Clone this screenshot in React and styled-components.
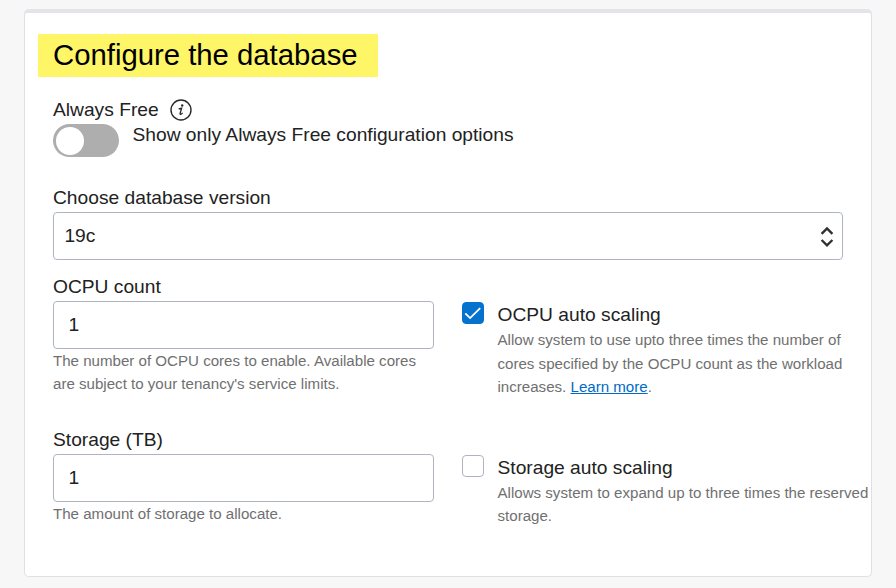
import React from "react";
import styled, { createGlobalStyle } from "styled-components";

const GlobalStyle = createGlobalStyle`
  * { box-sizing: border-box; }
  body {
    margin: 0;
    background: #f7f7f7;
    color: #222;
    font-family: "Liberation Sans", Arial, sans-serif;
    overflow: hidden;
  }
`;

const Page = styled.main`
  height: 588px;
  padding: 9px 24px 11px;
`;

const Card = styled.section`
  height: 568px;
  padding: 21px 0 0 28px;
  background: #fff;
  border: 1px solid #e0e0e3;
  border-top: 4px solid #e4e3e9;
  border-radius: 5px;
`;

const Title = styled.h1`
  width: 340px;
  height: 43px;
  margin: 0 0 0 -15px;
  padding-left: 15px;
  background: #fff667;
  color: #000;
  font-size: 29.3px;
  font-weight: 400;
  line-height: 42px;
  white-space: nowrap;
`;

const Text = styled.span`
  display: block;
  font-size: 19.22px;
  line-height: 24px;
  white-space: nowrap;
`;

const FreeHeading = styled.div`
  display: flex;
  height: 25px;
  margin-top: 21px;
  gap: 11px;

  svg { display: block; margin-top: 1px; }
`;

const ToggleRow = styled.div`
  display: flex;
  align-items: flex-start;
  gap: 13.5px;
  height: 63px;

  ${Text} { line-height: 23px; }
`;

const Toggle = styled.button`
  flex: none;
  width: 66px;
  height: 33px;
  margin-top: 1px;
  padding: 2px 2.5px;
  border: 0;
  border-radius: 17px;
  background: #aeaeae;

  &::before {
    content: "";
    display: block;
    width: 28px;
    height: 28px;
    border-radius: 50%;
    background: #fff;
  }
`;

const Field = styled.div`
  width: ${(p) => p.$width}px;
`;

const Control = styled.div`
  display: flex;
  align-items: center;
  justify-content: space-between;
  height: 48px;
  margin-top: 2px;
  padding: 0 8px 0 ${(p) => p.$inset}px;
  border: 1px solid #aeb5c0;
  border-radius: 4px;

  svg { margin-top: 2px; }
`;

const Columns = styled.div`
  display: grid;
  grid-template-columns: 381px 1fr;
  column-gap: 28px;
  height: 153px;
`;

const Fields = styled.div`
  margin-top: 15px;
`;

const Helper = styled.p`
  margin: ${(p) => p.$top || 0}px 0 0;
  color: #707070;
  font-size: 15.1px;
  line-height: 23.4px;
  white-space: nowrap;
`;

const Line = styled.span`
  display: block;
  line-height: ${(p) => p.$height || 23.4}px;
`;

const Option = styled.div`
  display: flex;
  gap: 13.5px;
  padding-top: 27px;
`;

const OptionText = styled.div`
  padding-top: 1px;
`;

const Checkbox = styled.span`
  flex: none;
  width: 22px;
  height: 22px;
  border: 1px solid ${(p) => (p.$checked ? "#0572ce" : "#aeb5c0")};
  border-radius: 4px;
  background: ${(p) => (p.$checked ? "#0572ce" : "#fff")};

  svg { display: block; }
`;

const Link = styled.a`
  color: #006bc7;
  text-decoration: underline;
`;

const InfoIcon = () => (
  <svg width="22" height="22" viewBox="0 0 22 22" fill="none" stroke="#292929">
    <circle cx="11" cy="11" r="10" strokeWidth="1.4" />
    <circle cx="12.2" cy="6.5" r="1.2" fill="#292929" stroke="none" />
    <path d="M8.6 9.9L11.6 9.1L10.1 14.5C9.8 15.9 11 15.7 12.6 13.9" strokeWidth="1.3" />
  </svg>
);

const SelectIcon = () => (
  <svg width="14" height="22" viewBox="0 0 14 22" fill="none" stroke="#303030" strokeWidth="2.4">
    <path d="M1.6 7.8L7 2.5L12.4 7.8M1.6 14L7 19.3L12.4 14" />
  </svg>
);

const CheckIcon = () => (
  <svg width="20" height="20" viewBox="0 0 20 20" fill="none" stroke="#fff" strokeWidth="1.8">
    <path d="M2.3 10.3L7.1 15.1L17.2 5.2" />
  </svg>
);

export default function App() {
  return (
    <>
      <GlobalStyle />
      <Page>
        <Card>
          <Title>Configure the database</Title>
          <FreeHeading>
            <Text>Always Free</Text>
            <InfoIcon />
          </FreeHeading>
          <ToggleRow>
            <Toggle aria-label="Always Free" />
            <Text>Show only Always Free configuration options</Text>
          </ToggleRow>
          <Field $width={790}>
            <Text>Choose database version</Text>
            <Control $inset={10.4}>
              <Text>19c</Text>
              <SelectIcon />
            </Control>
          </Field>
          <Fields>
            <Columns>
              <Field $width={381}>
                <Text>OCPU count</Text>
                <Control $inset={14.4}><Text>1</Text></Control>
                <Helper>
                  <Line>The number of OCPU cores to enable. Available cores</Line>
                  <Line>are subject to your tenancy's service limits.</Line>
                </Helper>
              </Field>
              <Option>
                <Checkbox $checked><CheckIcon /></Checkbox>
                <OptionText>
                  <Text>OCPU auto scaling</Text>
                  <Helper $top={1}>
                    <Line $height={24}>Allow system to use upto three times the number of</Line>
                    <Line $height={23}>cores specified by the OCPU count as the workload</Line>
                    <Line>increases. <Link>Learn more</Link>.</Line>
                  </Helper>
                </OptionText>
              </Option>
            </Columns>
            <Columns>
              <Field $width={381}>
                <Text>Storage (TB)</Text>
                <Control $inset={14.4}><Text>1</Text></Control>
                <Helper><Line>The amount of storage to allocate.</Line></Helper>
              </Field>
              <Option>
                <Checkbox />
                <OptionText>
                  <Text>Storage auto scaling</Text>
                  <Helper $top={1}>
                    <Line>Allows system to expand up to three times the reserved</Line>
                    <Line>storage.</Line>
                  </Helper>
                </OptionText>
              </Option>
            </Columns>
          </Fields>
        </Card>
      </Page>
    </>
  );
}
